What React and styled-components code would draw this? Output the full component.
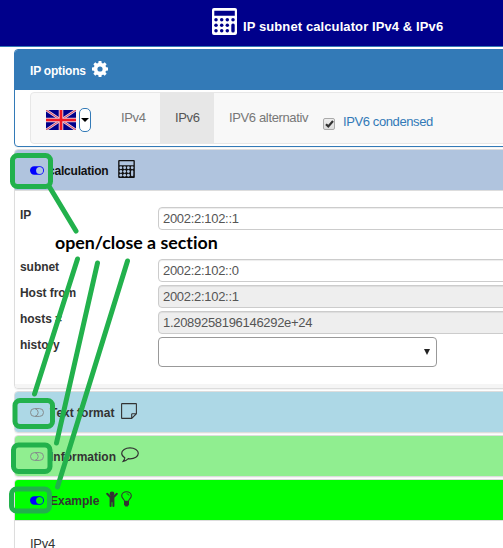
import React from 'react';
import styled, { createGlobalStyle } from 'styled-components';

const Global = createGlobalStyle`
  * { box-sizing: border-box; }
  body { margin: 0; background: #fff; overflow: hidden; }
`;

const Page = styled.div`
  position: relative;
  width: 503px;
  height: 548px;
  overflow: hidden;
  color: #333;
  font-family: "Liberation Sans", Arial, sans-serif;
  font-size: 13px;
`;

const TopBar = styled.header`
  display: flex;
  align-items: flex-start;
  height: 47px;
  padding: 8px 0 0 212px;
  background: #00008b;
  border-bottom: 1px solid #337ab7;
  color: #fff;
`;

const Title = styled.h1`
  margin: 10px 0 0 6px;
  font: bold 13px/18px "Liberation Sans", Arial, sans-serif;
  letter-spacing: .1px;
  white-space: nowrap;
`;

const Stack = styled.main`
  display: flex;
  flex-direction: column;
  gap: 2px;
  width: 520px;
  padding: 2px 0 0 14px;
`;

const Panel = styled.section`
  border: 1px solid ${p => p.$line || '#ddd'};
  border-radius: 4px;
  box-shadow: 0 1px 1px rgba(0, 0, 0, .05);
  overflow: hidden;
  flex-shrink: 0;
`;

const PanelHead = styled.div`
  display: flex;
  align-items: center;
  height: 40px;
  padding-left: 15px;
  background: ${p => p.$bg};
  color: ${p => p.$ink || '#333'};
`;

const PanelName = styled.h2`
  width: ${p => p.$width}px;
  margin: 2px 0 0 ${p => p.$left || 0}px;
  font-size: 12px;
  font-weight: 700;
  line-height: 16px;
  letter-spacing: ${p => p.$track || 0}px;
  white-space: nowrap;
`;

const HeadIcon = styled.span`
  display: flex;
  align-items: center;
  gap: 3px;
  margin-bottom: 2px;
`;

const NavBar = styled.nav`
  display: flex;
  width: 500px;
  height: 52px;
  margin: 2px 0 2px 15px;
  background: #f8f8f8;
  border: 1px solid #e7e7e7;
  border-radius: 4px;
`;

const Language = styled.div`
  display: flex;
  align-items: center;
  gap: 3px;
  width: 75px;
  padding: 3px 0 0 15px;
`;

const LangButton = styled.button`
  display: grid;
  place-items: center;
  width: 12px;
  height: 24px;
  padding: 0;
  border: 1px solid #337ab7;
  border-radius: 5px;
  background: #fff;
`;

const Tab = styled.a`
  width: ${p => p.$width}px;
  padding: 17px 0 0 15px;
  line-height: 16px;
  letter-spacing: -.36px;
  white-space: nowrap;
  color: ${p => (p.$active ? '#555' : '#777')};
  background: ${p => (p.$active ? '#e7e7e7' : 'transparent')};
`;

const CheckLabel = styled.label`
  display: flex;
  align-items: center;
  gap: 8px;
  padding-top: 12px;
  color: #337ab7;
  letter-spacing: -.4px;
  white-space: nowrap;
`;

const CheckText = styled.span`
  margin-top: -6px;
`;

const Check = styled.span`
  display: grid;
  place-items: center;
  width: 12px;
  height: 12px;
  margin-left: 3px;
  border: 1px solid #aaa;
  border-radius: 2px;
  background: linear-gradient(#eee, #ddd);
`;

const Form = styled.form`
  display: flex;
  flex-direction: column;
  gap: 3px;
  height: 194px;
  padding: 16px 0 0 5px;
  border-top: 1px solid #ddd;
`;

const Row = styled.div`
  display: flex;
  height: 23px;
  margin-bottom: ${p => p.$after || 0}px;
`;

const FieldLabel = styled.label`
  flex: 0 0 138px;
  font-weight: 700;
  font-size: 12px;
  line-height: 17px;
  letter-spacing: -.05px;
`;

const Field = styled.input`
  flex: 0 0 420px;
  height: 23px;
  padding: 0 4px 1px;
  color: #555;
  font: 13px "Liberation Sans", Arial, sans-serif;
  letter-spacing: -.3px;
  background: ${p => (p.$locked ? '#eee' : '#fff')};
  border: 1px solid #ccc;
  border-radius: 4px;
  box-shadow: inset 0 1px 1px rgba(0, 0, 0, .075);
  outline: none;
`;

const Picker = styled.div`
  display: flex;
  align-items: center;
  justify-content: flex-end;
  width: 279px;
  height: 30px;
  padding-right: 6px;
  border: 1px solid #999;
  border-radius: 4px;
`;

const Footer = styled.div`
  height: 4px;
  background: #f5f5f5;
`;

const Content = styled.div`
  height: 70px;
  padding: 14px 15px;
  border-top: 1px solid #ddd;
  font-size: 13px;
  line-height: 18px;
  letter-spacing: -.25px;
  color: #333;
`;

const Notes = styled.svg`
  position: absolute;
  inset: 0;
`;

const NoteText = styled.div`
  position: absolute;
  left: 55px;
  top: 231px;
  font: bold 17.8px/22px Lato, "Open Sans", sans-serif;
  font-variant-ligatures: none;
  color: #000;
  white-space: nowrap;
`;

const Calculator = ({ w, h, bold }) => (
  <svg width={w} height={h} viewBox="0 0 25 27" fill="currentColor">
    <path fillRule="evenodd" d={bold
      ? 'M2 0H23Q25 0 25 2V25Q25 27 23 27H2Q0 27 0 25V2Q0 0 2 0ZM2.3 2.8V7.8H22.8V2.8Z'
      : 'M1.5 0H23.5Q25 0 25 1.5V25.5Q25 27 23.5 27H1.5Q0 27 0 25.5V1.5Q0 0 1.5 0ZM2 2V8H23V2Z'} />
    <g fill={bold ? '#00008b' : '#b0c4de'}>
      {[11.7, 17.2, 22.8].map(y => [4, 9.7, 15.3, 21].map(x => (
        (y < 12 || x < 21) && <circle key={`${x}-${y}`} cx={x} cy={y} r={bold ? 1.75 : 2.15} />
      )))}
      <rect x="19.3" y="15.5" width="3.4" height="9" rx="1.6" />
    </g>
  </svg>
);

const Gear = () => (
  <svg width="16" height="16" viewBox="0 0 16 16">
    <g fill="#fff">
      <path fillRule="evenodd" d="M8 1.7a6.3 6.3 0 1 0 0 12.6A6.3 6.3 0 0 0 8 1.7ZM8 5.4a2.6 2.6 0 1 1 0 5.2a2.6 2.6 0 0 1 0-5.2Z" />
      {[0, 45, 90, 135, 180, 225, 270, 315].map(a => (
        <path key={a} d="M6.6 0H9.4L9.9 3.4H6.1Z" transform={`rotate(${a} 8 8)`} />
      ))}
    </g>
  </svg>
);

const Flag = () => (
  <svg width="30" height="20" viewBox="0 0 30 20">
    <path fill="#00008b" d="M0 0H30V20H0Z" />
    <path d="M0 0L30 20M30 0L0 20" stroke="#e6c9da" strokeWidth="2.6" />
    <path d="M0 0L30 20M30 0L0 20" stroke="#d8405c" strokeWidth="1" />
    <path d="M15 0V20M0 10H30" stroke="#e9c4d4" strokeWidth="4.6" />
    <path d="M15 0V20M0 10H30" stroke="#f01824" strokeWidth="2.6" />
  </svg>
);

const Toggle = ({ on }) => (
  <svg width="14" height="9" viewBox="0 0 14 9">
    {on ? (
      <>
        <rect y=".3" width="14" height="8.4" rx="4.2" fill="#00f" />
        <circle cx="9.6" cy="4.5" r="3.5" fill={on} />
      </>
    ) : (
      <g fill="none" stroke="#858b8d">
        <rect x=".5" y=".6" width="13" height="7.8" rx="3.9" />
        <path d="M5.2 .7Q8.2 1.7 8.2 4.5T5.2 8.3" />
      </g>
    )}
  </svg>
);

const StickyNote = () => (
  <svg width="16" height="16" viewBox="0 0 16 16" fill="none" stroke="#333" strokeWidth="1.1">
    <path d="M1 .6H15Q15.4 .6 15.4 1V10.7L10.7 15.4H1Q.6 15.4 .6 15V1Q.6 .6 1 .6ZM10.7 15.2V11.3Q10.7 10.7 11.3 10.7H15.2" />
  </svg>
);

const Comment = () => (
  <svg width="18" height="16" viewBox="0 0 18 16" fill="none" stroke="#333" strokeWidth="1.2">
    <path d="M9 .8C13.6 .8 17.3 3.2 17.3 6.3S13.6 11.8 9 11.8Q8.2 11.8 7.3 11.7Q5 14 2.2 14.4Q3.7 12.6 3.8 10.8Q.7 9.1 .7 6.3C.7 3.2 4.4 .8 9 .8Z" />
  </svg>
);

const Child = () => (
  <svg width="12" height="17" viewBox="0 0 12 17" fill="#333">
    <circle cx="6" cy="3" r="2.4" />
    <path d="M.3 2.3Q1.2 1.3 2.1 2.2L4.7 5H7.3L9.9 2.2Q10.9 1.3 11.7 2.3Q12.1 2.9 11.5 3.6L8.4 6.8V15Q8.4 16 7.4 16T6.4 15V11.3H5.6V15Q5.6 16 4.6 16T3.6 15V6.8L.5 3.6Q-.1 2.9 .3 2.3Z" />
  </svg>
);

const Bulb = () => (
  <svg width="11" height="16" viewBox="0 0 11 16">
    <path d="M3.5 10.3C3.3 8.2 .7 7.5 .7 4.8C.7 2.3 2.9 .7 5.5 .7S10.3 2.3 10.3 4.8C10.3 7.5 7.7 8.2 7.5 10.3Z" fill="none" stroke="#333" strokeWidth="1.1" />
    <path d="M5.5 2.7Q7.7 2.7 8.1 4.6" fill="none" stroke="#333" strokeWidth=".7" />
    <path d="M3 10H8V13.6L6.7 15.5H4.3L3 13.6Z" fill="#333" />
  </svg>
);

const sections = [
  { name: 'Text format', bg: '#add8e6', icon: <StickyNote /> },
  { name: 'Information', bg: '#90ee90', icon: <Comment /> },
];

const fields = [
  { name: 'IP', value: '2002:2:102::1', after: 26 },
  { name: 'subnet', value: '2002:2:102::0' },
  { name: 'Host from', value: '2002:2:102::1', locked: true },
  { name: 'hosts =', value: '1.2089258196146292e+24', locked: true },
];

export default function App() {
  return (
    <Page>
      <Global />
      <TopBar>
        <Calculator w={25} h={27} bold />
        <Title>IP subnet calculator IPv4 &amp; IPv6</Title>
      </TopBar>
      <Stack>
        <Panel $line="#337ab7">
          <PanelHead $bg="#337ab7" $ink="#fff">
            <PanelName $width={62} $track={-.2}>IP options</PanelName>
            <HeadIcon><Gear /></HeadIcon>
          </PanelHead>
          <NavBar>
            <Language>
              <Flag />
              <LangButton type="button">
                <svg width="8" height="4" viewBox="0 0 8 4"><path d="M0 0H8L4 4Z" /></svg>
              </LangButton>
            </Language>
            <Tab $width={54}>IPv4</Tab>
            <Tab $width={54} $active>IPv6</Tab>
            <Tab $width={106}>IPV6 alternativ</Tab>
            <CheckLabel>
              <Check>
                <svg width="9" height="8" viewBox="0 0 9 8"><path d="M1 4.2L3.3 6.4L8 1" fill="none" stroke="#333" strokeWidth="2.2" /></svg>
              </Check>
              <CheckText>IPV6 condensed</CheckText>
            </CheckLabel>
          </NavBar>
        </Panel>

        <Panel>
          <PanelHead $bg="#b0c4de" $ink="#111">
            <Toggle on="#b0c4de" />
            <PanelName $left={4} $width={70} $track={-.2}>calculation</PanelName>
            <HeadIcon><Calculator w={17} h={18} /></HeadIcon>
          </PanelHead>
          <Form>
            {fields.map(f => (
              <Row key={f.name} $after={f.after}>
                <FieldLabel>{f.name}</FieldLabel>
                <Field readOnly $locked={f.locked} value={f.value} />
              </Row>
            ))}
            <Row>
              <FieldLabel>history</FieldLabel>
              <Picker>
                <svg width="6" height="6" viewBox="0 0 6 6"><path d="M0 0H6L3 6Z" fill="#222" /></svg>
              </Picker>
            </Row>
          </Form>
          <Footer />
        </Panel>

        {sections.map(s => (
          <Panel key={s.name}>
            <PanelHead $bg={s.bg}>
              <Toggle />
              <PanelName $left={6} $width={71}>{s.name}</PanelName>
              <HeadIcon>{s.icon}</HeadIcon>
            </PanelHead>
          </Panel>
        ))}

        <Panel>
          <PanelHead $bg="#0f0">
            <Toggle on="#0f0" />
            <PanelName $left={6} $width={56}>Example</PanelName>
            <HeadIcon>
              <Child />
              <Bulb />
            </HeadIcon>
          </PanelHead>
          <Content>IPv4</Content>
        </Panel>
      </Stack>

      <Notes width="503" height="548" viewBox="0 0 503 548" fill="none" stroke="#22b14c" strokeWidth="5" strokeLinecap="round">
        <rect x="12.5" y="155.5" width="38" height="31" rx="5" />
        <rect x="15" y="400.5" width="37.5" height="26" rx="5" />
        <rect x="13.5" y="445" width="36.5" height="26.5" rx="5" />
        <rect x="11.5" y="489" width="38" height="22" rx="5" />
        <path d="M49.5 187L76 231M77.5 259L34.5 394M97.5 263L56.5 443M127.5 261L57.5 487" />
      </Notes>
      <NoteText>open/close a section</NoteText>
    </Page>
  );
}
